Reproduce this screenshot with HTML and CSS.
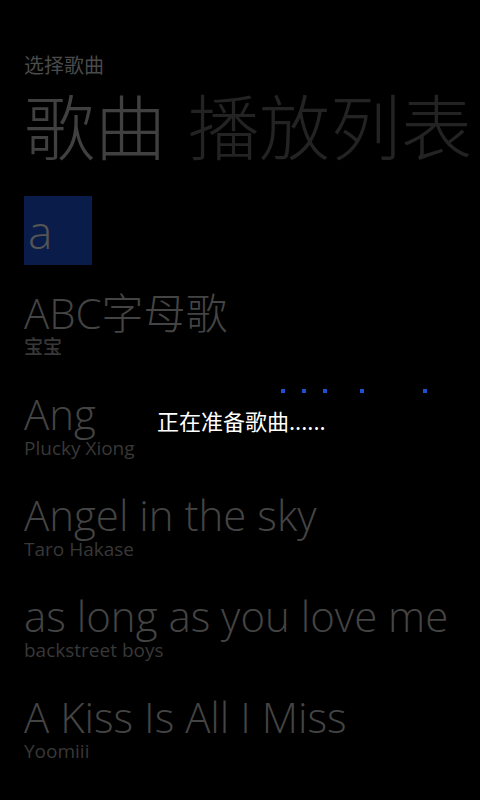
FILE: index.html
```html
<!DOCTYPE html>
<html lang="zh-CN">
<head>
    <meta charset="UTF-8">
    <meta name="viewport" content="width=device-width, initial-scale=1.0">
    <title>选择歌曲</title>
    <link rel="stylesheet" href="styles.css">
</head>
<body>
    <div class="page">
        <div class="app-title">选择歌曲</div>
        <div class="pivot">
            <span class="pivot-item active">歌曲</span>
            <span class="pivot-item">播放列表</span>
        </div>

        <div class="jump-tile">a</div>

        <ul class="song-list">
            <li class="song">
                <div class="song-title">ABC字母歌</div>
                <div class="song-artist">宝宝</div>
            </li>
            <li class="song">
                <div class="song-title">Ang</div>
                <div class="song-artist">Plucky Xiong</div>
            </li>
            <li class="song">
                <div class="song-title">Angel in the sky</div>
                <div class="song-artist">Taro Hakase</div>
            </li>
            <li class="song">
                <div class="song-title">as long as you love me</div>
                <div class="song-artist">backstreet boys</div>
            </li>
            <li class="song">
                <div class="song-title">A Kiss Is All I Miss</div>
                <div class="song-artist">Yoomiii</div>
            </li>
        </ul>
    </div>

    <div class="loading">
        <div class="progress">
            <span class="dot" style="left: 281px"></span>
            <span class="dot" style="left: 302px"></span>
            <span class="dot" style="left: 323px"></span>
            <span class="dot" style="left: 360px"></span>
            <span class="dot" style="left: 423px"></span>
        </div>
        <div class="loading-text">正在准备歌曲......</div>
    </div>
</body>
</html>
```

FILE: styles.css
```css
* {
    margin: 0;
    padding: 0;
    box-sizing: border-box;
}
html, body {
    height: 100%;
}
body {
    background: #000;
    font-family: 'Open Sans', 'Noto Sans CJK SC', sans-serif;
    overflow: hidden;
    position: relative;
}
.page {
    padding: 56px 0 0 24px;
}
.app-title {
    font-size: 20px;
    line-height: 20px;
    color: #4a4a4a;
}
.pivot {
    display: flex;
    gap: 22px;
    margin-top: 12px;
    white-space: nowrap;
    font-family: 'Noto Sans CJK SC', sans-serif;
    font-weight: 300;
    font-size: 71px;
    line-height: 71px;
}
.pivot-item {
    color: #232323;
}
.pivot-item.active {
    color: #404040;
}
.jump-tile {
    width: 68px;
    height: 69px;
    margin-top: 37px;
    background: #0a1d4a;
    color: #555;
    font-weight: 300;
    font-size: 46px;
    line-height: 46px;
    padding: 12px 0 0 4px;
}
.song-list {
    list-style: none;
    margin-top: 24px;
}
.song {
    height: 101px;
}
.song-title {
    font-weight: 300;
    font-size: 42px;
    line-height: 46px;
    padding-top: 1px;
    color: #444;
    white-space: nowrap;
}
.song-artist {
    font-size: 19px;
    line-height: 22px;
    font-weight: 500;
    color: #383838;
}
.loading {
    position: absolute;
    inset: 0;
}
.progress .dot {
    position: absolute;
    top: 389px;
    width: 4px;
    height: 4px;
    background: #1e50d2;
}
.loading-text {
    position: absolute;
    top: 407px;
    left: 157px;
    font-family: 'Noto Sans CJK SC', sans-serif;
    font-size: 22px;
    line-height: 26px;
    color: #fff;
}
```
